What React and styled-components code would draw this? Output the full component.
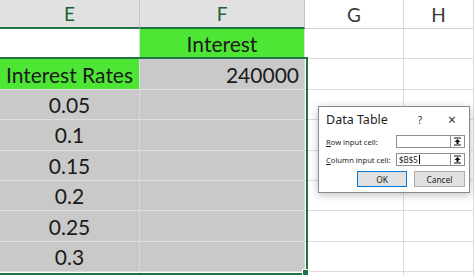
import React from "react"
import styled, { createGlobalStyle } from "styled-components"

const GlobalStyle = createGlobalStyle`
  html, body {
    margin: 0;
    padding: 0;
    background: #ffffff;
    overflow: hidden;
  }
`

const Sheet = styled.div`
  position: relative;
  width: 474px;
  height: 276px;
  overflow: hidden;
  background: #ffffff;
  font-family: Lato, "Noto Sans", sans-serif;
`

const Grid = styled.div`
  display: grid;
  grid-template-columns: 140px 165px 99px 70px;
  grid-template-rows: 29px repeat(9, 30.4px);
`

const ColHeader = styled.div`
  display: flex;
  align-items: center;
  justify-content: center;
  box-sizing: border-box;
  font-size: 19px;
  color: ${(p) => (p.$active ? "#21603a" : "#3a3a3a")};
  background: ${(p) => (p.$active ? "#e1e1e1" : "#ffffff")};
  border-right: 1px solid ${(p) => (p.$active ? "#c4c4c4" : "#dadada")};
  border-bottom: ${(p) => (p.$active ? "2px solid #217346" : "1px solid #d4d4d4")};
`

const Cell = styled.div`
  display: flex;
  align-items: center;
  justify-content: ${(p) => p.$align || "center"};
  box-sizing: border-box;
  padding: 0 5px;
  font-size: 21px;
  color: #1a1a1a;
  background: ${(p) => p.$bg || "#ffffff"};
  border-right: 1px solid ${(p) => (p.$sel ? "#d8d8d8" : "#dcdcdc")};
  border-bottom: 1px solid ${(p) => (p.$sel ? "#dedede" : "#dcdcdc")};
`

const Selection = styled.div`
  position: absolute;
  left: -3px;
  top: 57px;
  width: 307px;
  height: 214px;
  border: 2px solid #217346;
  pointer-events: none;
`

const FillHandle = styled.div`
  position: absolute;
  left: 302px;
  top: 269px;
  width: 5px;
  height: 5px;
  background: #217346;
  border: 1px solid #ffffff;
`

const Dialog = styled.div`
  position: absolute;
  left: 318px;
  top: 106px;
  width: 152px;
  height: 87px;
  box-sizing: border-box;
  background: #ffffff;
  border: 1px solid #8a8a8a;
  box-shadow: 0 2px 8px rgba(0, 0, 0, 0.25);
  font-family: "Noto Sans", "Open Sans", sans-serif;
  color: #1e1e1e;
  display: flex;
  flex-direction: column;
  padding: 0 4px 0 7px;
`

const TitleBar = styled.div`
  display: flex;
  align-items: center;
  height: 25px;
  font-size: 12.5px;
`

const Title = styled.div`
  flex: 1;
`

const TitleButton = styled.div`
  width: ${(p) => p.$w}px;
  text-align: center;
  font-size: ${(p) => p.$size}px;
  color: #333;
`

const FieldRow = styled.div`
  display: flex;
  align-items: center;
  height: 15px;
  margin-top: ${(p) => p.$mt || 0}px;
  font-size: 7.6px;
`

const Label = styled.div`
  flex: 1;
  white-space: nowrap;
  overflow: hidden;
  u {
    text-decoration: underline;
  }
`

const Input = styled.div`
  width: 54px;
  height: 13px;
  box-sizing: border-box;
  border: 1px solid #8f8f8f;
  border-right: none;
  font-size: 8px;
  line-height: 11px;
  padding-left: 2px;
  display: flex;
  align-items: center;
`

const Caret = styled.span`
  display: inline-block;
  width: 1px;
  height: 9px;
  background: #000;
  margin-left: 1px;
`

const PickButton = styled.div`
  width: 15px;
  height: 13px;
  box-sizing: border-box;
  border: 1px solid #8f8f8f;
  display: flex;
  align-items: center;
  justify-content: center;
`

const ButtonRow = styled.div`
  display: flex;
  justify-content: flex-end;
  gap: 7px;
  margin-top: 4px;
`

const Button = styled.div`
  width: ${(p) => p.$w}px;
  height: 16px;
  box-sizing: border-box;
  background: #e1e1e1;
  border: ${(p) => (p.$primary ? "1.5px solid #0078d7" : "1px solid #adadad")};
  display: flex;
  align-items: center;
  justify-content: center;
  font-size: 8.4px;
`

const PickIcon = () => (
  <svg width="9" height="9" viewBox="0 0 9 9">
    <rect x="1" y="0.5" width="7" height="1" fill="#111" />
    <path d="M4.5 2 L7.5 5 L5.5 5 L5.5 7 L3.5 7 L3.5 5 L1.5 5 Z" fill="#111" />
    <rect x="1" y="7.5" width="7" height="1" fill="#111" />
  </svg>
)

const GREEN = "#4de635"
const SEL = "#c9c9c9"

const rates = ["0.05", "0.1", "0.15", "0.2", "0.25", "0.3"]

export default function App() {
  return (
    <>
      <GlobalStyle />
      <Sheet>
        <Grid>
          <ColHeader $active>E</ColHeader>
          <ColHeader $active>F</ColHeader>
          <ColHeader>G</ColHeader>
          <ColHeader>H</ColHeader>

          <Cell />
          <Cell $bg={GREEN}>Interest</Cell>
          <Cell />
          <Cell />

          <Cell $bg={GREEN}>Interest Rates</Cell>
          <Cell $bg={SEL} $sel $align="flex-end">240000</Cell>
          <Cell />
          <Cell />

          {rates.map((r) => (
            <React.Fragment key={r}>
              <Cell $bg={SEL} $sel>{r}</Cell>
              <Cell $bg={SEL} $sel />
              <Cell />
              <Cell />
            </React.Fragment>
          ))}

          <Cell />
          <Cell />
          <Cell />
          <Cell />
        </Grid>
        <Selection />
        <FillHandle />

        <Dialog>
          <TitleBar>
            <Title>Data Table</Title>
            <TitleButton $w={38} $size={10}>?</TitleButton>
            <TitleButton $w={26} $size={14}>×</TitleButton>
          </TitleBar>
          <FieldRow $mt={2}>
            <Label><u>R</u>ow input cell:</Label>
            <Input />
            <PickButton><PickIcon /></PickButton>
          </FieldRow>
          <FieldRow $mt={3}>
            <Label><u>C</u>olumn input cell:</Label>
            <Input>$B$5<Caret /></Input>
            <PickButton><PickIcon /></PickButton>
          </FieldRow>
          <ButtonRow>
            <Button $w={50} $primary>OK</Button>
            <Button $w={51}>Cancel</Button>
          </ButtonRow>
        </Dialog>
      </Sheet>
    </>
  )
}
